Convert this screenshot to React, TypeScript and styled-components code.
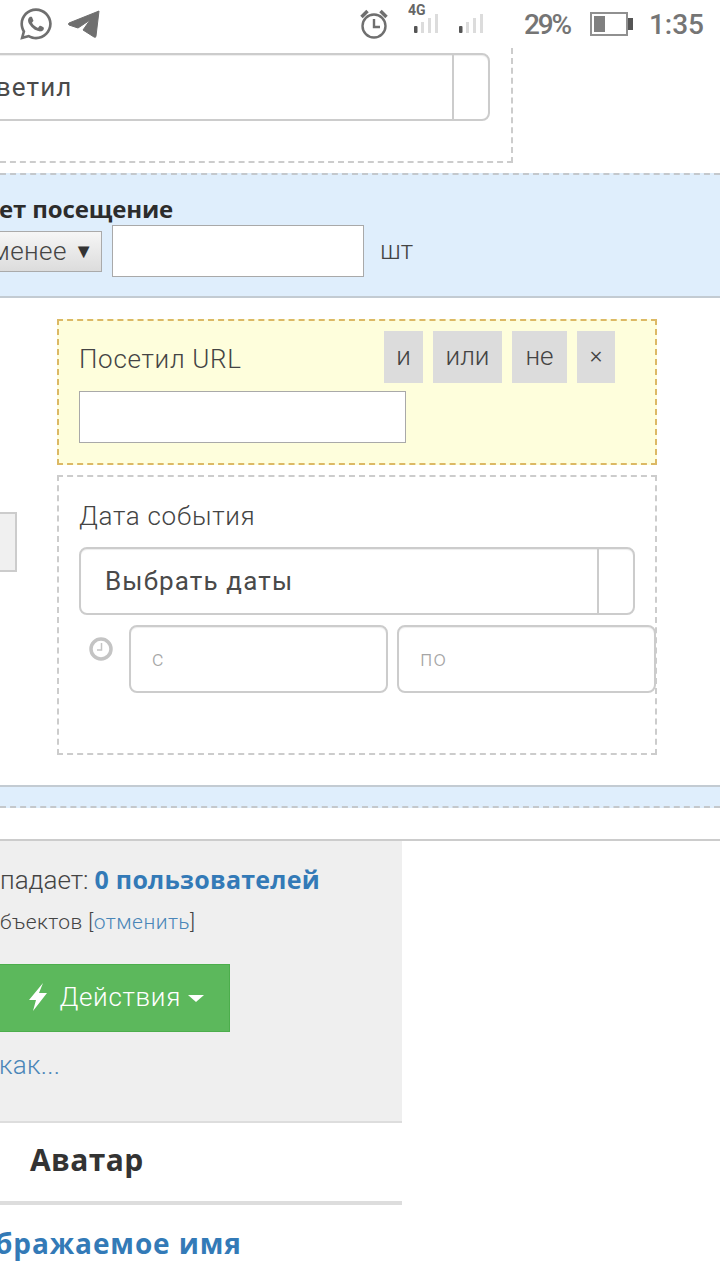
import React from "react";
import styled, { createGlobalStyle } from "styled-components";
import { FaWhatsapp } from "react-icons/fa";

const Global = createGlobalStyle`
  html, body { margin: 0; padding: 0; background: #fff; }
  * { box-sizing: border-box; }
`;

const Page = styled.div`
  width: 720px;
  height: 1280px;
  overflow: hidden;
  background: #fff;
  font-family: Roboto, "Liberation Sans", sans-serif;
  font-weight: 300;
  color: #333;
  display: flex;
  flex-direction: column;
`;

const StatusBar = styled.div`
  height: 48px;
  flex: none;
  display: flex;
  align-items: center;
  padding: 0 16px 0 18px;
  color: #6f6f6f;
`;
const StatusLeft = styled.div`
  display: flex;
  align-items: center;
  gap: 14px;
  flex: 1;
`;
const StatusText = styled.span<{ $size: number; $ml: number; $ls?: number }>`
  font-family: Roboto, sans-serif;
  font-weight: 500;
  font-size: ${(p) => p.$size}px;
  letter-spacing: ${(p) => p.$ls ?? 0}px;
  margin-left: ${(p) => p.$ml}px;
  color: #757575;
`;
const SignalWrap = styled.svg<{ $ml: number }>`
  margin-left: ${(p) => p.$ml}px;
  display: block;
  flex: none;
`;
const BatteryIcon = styled.svg`
  margin-left: 20px;
  flex: none;
`;

const TopCard = styled.div`
  width: 513px;
  height: 115px;
  flex: none;
  padding-top: 5px;
  border-right: 2px dashed #ccc;
  border-bottom: 2px dashed #ccc;
`;
const ChoiceBox = styled.div<{ $w: number; $ml?: number; $pl: number }>`
  width: ${(p) => p.$w}px;
  margin-left: ${(p) => p.$ml ?? 0}px;
  height: 68px;
  padding-left: ${(p) => p.$pl}px;
  border: 2px solid #ccc;
  border-radius: 8px;
  box-shadow: inset 0 1px 1px rgba(0, 0, 0, 0.075);
  display: flex;
  align-items: center;
  justify-content: space-between;
  background: #fff;
  font-size: 26px;
  letter-spacing: 1.15px;
  font-weight: 400;
  color: #4a4a4a;
`;
const ChoiceArrow = styled.div`
  width: 36px;
  height: 100%;
  border-left: 2px solid #ccc;
  flex: none;
`;

const BlueBand = styled.div`
  margin-top: 10px;
  height: 125px;
  flex: none;
  background: #dfeefc;
  border-top: 2px dashed #c4c8cc;
  border-bottom: 2px solid #c3cbd2;
  padding-top: 19px;
`;
const BandTitle = styled.div`
  font-family: "Open Sans", sans-serif;
  font-weight: 700;
  font-size: 24px;
  letter-spacing: -0.15px;
  line-height: 30px;
  color: #2c2c2c;
  margin-left: -1px;
  white-space: nowrap;
`;
const BandRow = styled.div`
  display: flex;
  align-items: center;
  height: 52px;
  margin-top: 1px;
`;
const FakeSelect = styled.div`
  width: 102px;
  height: 41px;
  padding-right: 7px;
  border: 1px solid #aaa;
  border-left: none;
  background: linear-gradient(#f6f6f6, #dcdcdc);
  display: flex;
  align-items: center;
  justify-content: flex-end;
  gap: 7px;
  overflow: hidden;
  font-size: 26px;
  letter-spacing: 0.4px;
  color: #444;
  white-space: nowrap;
`;
const SelectTri = styled.span`
  font-family: "DejaVu Sans", sans-serif;
  font-size: 20px;
  color: #333;
`;
const TextField = styled.div<{ $w: number }>`
  width: ${(p) => p.$w}px;
  height: 52px;
  flex: none;
  background: #fff;
  border: 1px solid #a9a9a9;
`;
const BandField = styled(TextField)`
  margin-left: 10px;
`;
const Unit = styled.span`
  margin-left: 16px;
  padding-bottom: 2px;
  font-size: 26px;
  color: #444;
`;

const Middle = styled.div`
  height: 487px;
  flex: none;
  display: flex;
  align-items: flex-start;
`;
const Stub = styled.div`
  width: 17px;
  height: 60px;
  flex: none;
  margin-top: 214px;
  background: #f0f0f0;
  border: 2px solid #ccc;
  border-left: none;
`;
const ConditionColumn = styled.div`
  margin-left: 40px;
  margin-top: 21px;
  width: 600px;
  display: flex;
  flex-direction: column;
  gap: 10px;
`;
const UrlCard = styled.div`
  height: 146px;
  background: #fefedc;
  border: 2px dashed #dcb965;
  padding: 10px 20px;
  position: relative;
`;
const CardLabel = styled.div`
  font-size: 26px;
  letter-spacing: 0.7px;
  line-height: 32px;
  color: #444;
`;
const UrlLabel = styled(CardLabel)`
  margin-top: 12px;
  margin-bottom: 16px;
`;
const Ops = styled.div`
  position: absolute;
  top: 10px;
  left: 325px;
  display: flex;
  gap: 10px;
`;
const Op = styled.div<{ $w: number; $small?: boolean }>`
  width: ${(p) => p.$w}px;
  height: 52px;
  background: #dcdcdc;
  display: flex;
  align-items: center;
  justify-content: center;
  font-size: ${(p) => (p.$small ? 24 : 26)}px;
  color: #444;
  padding-bottom: ${(p) => (p.$small ? 5 : 2)}px;
`;
const DateCard = styled.div`
  height: 280px;
  border: 2px dashed #ccc;
  padding: 23px 20px 0;
`;
const DateLabel = styled(CardLabel)`
  margin-bottom: 15px;
`;
const RangeRow = styled.div`
  margin-top: 10px;
  margin-right: -22px;
  display: flex;
  gap: 9px;
`;
const ClockSlot = styled.div`
  width: 41px;
  flex: none;
  padding: 12px 0 0 10px;
`;
const RangeField = styled.div`
  width: 259px;
  height: 68px;
  flex: none;
  border: 2px solid #ccc;
  border-radius: 8px;
  box-shadow: inset 0 1px 1px rgba(0, 0, 0, 0.075);
  background: #fff;
  padding: 0 0 2px 21px;
  display: flex;
  align-items: center;
  font-size: 22px;
  letter-spacing: 1px;
  color: #a6a6a6;
`;
const SlimBand = styled.div`
  height: 23px;
  flex: none;
  background: #dfeefc;
  border-top: 2px solid #c3cbd2;
  border-bottom: 2px dashed #c4c8cc;
`;
const Rule = styled.div`
  margin-top: 31px;
  height: 2px;
  flex: none;
  background: #ccc;
`;
const Panel = styled.div`
  width: 402px;
  height: 280px;
  flex: none;
  background: #efefef;
  overflow: hidden;
`;
const Summary = styled.div`
  margin-top: 22px;
  display: flex;
  align-items: baseline;
  gap: 6px;
  font-size: 26px;
  line-height: 32px;
  color: #444;
  white-space: nowrap;
`;
const Bold = styled.span`
  font-family: "Open Sans", sans-serif;
  font-weight: 700;
  font-size: 25px;
  letter-spacing: 0.25px;
  color: #337ab7;
`;
const SmallLine = styled.div`
  margin-top: 11px;
  font-size: 21px;
  letter-spacing: 0.45px;
  line-height: 30px;
  color: #444;
  white-space: nowrap;
`;
const Link = styled.span`
  color: #4a86b8;
`;
const ActionButton = styled.div`
  margin-top: 27px;
  width: 230px;
  height: 68px;
  padding-bottom: 2px;
  background: #5cb85c;
  border: 1px solid #4cae4c;
  border-left: none;
  display: flex;
  align-items: center;
  justify-content: flex-end;
  padding-right: 25px;
  color: #fff;
  font-size: 26px;
  letter-spacing: 0.7px;
  white-space: nowrap;
`;
const Caret = styled.span`
  margin-left: 7px;
  margin-top: 2px;
  width: 0;
  height: 0;
  border-left: 8px solid transparent;
  border-right: 8px solid transparent;
  border-top: 7px solid #fff;
`;
const BoltIcon = styled.svg`
  margin-right: 11px;
  flex: none;
`;
const HowLink = styled.div`
  margin-top: 17px;
  margin-left: -1px;
  font-size: 26px;
  letter-spacing: 0.3px;
  line-height: 32px;
  color: #4a86b8;
  white-space: nowrap;
`;
const HeadCell = styled.div`
  width: 402px;
  height: 84px;
  flex: none;
  border-top: 2px solid #ddd;
  border-bottom: 4px solid #ddd;
  padding: 17px 0 0 30px;
  font-family: "Open Sans", sans-serif;
  font-weight: 700;
  font-size: 30px;
  letter-spacing: 0.35px;
  line-height: 40px;
  color: #333;
`;
const NameCell = styled.div`
  margin-top: 18px;
  margin-left: -5px;
  font-family: "Open Sans", sans-serif;
  font-weight: 700;
  font-size: 28px;
  letter-spacing: 0.9px;
  line-height: 40px;
  color: #337ab7;
  white-space: nowrap;
`;

const Signal = ({ ml, w4g }: { ml: number; w4g?: boolean }) => (
  <SignalWrap $ml={ml} width="34" height="48" viewBox="0 0 34 48">
    {w4g && (
      <text x="0" y="15" fontFamily="Roboto, sans-serif" fontWeight="700" fontSize="14" fill="#666">
        4G
      </text>
    )}
    <rect x="6" y="26" width="3.5" height="7" rx="1" fill="#555" />
    <rect x="13" y="22" width="3" height="11" fill="#dcdcdc" />
    <rect x="20" y="18" width="3" height="15" fill="#dcdcdc" />
    <rect x="27" y="14" width="3" height="19" fill="#dcdcdc" />
  </SignalWrap>
);

export default function App() {
  return (
    <Page>
      <Global />
      <StatusBar>
        <StatusLeft>
          <FaWhatsapp size={36} />
          <svg width="32" height="30" viewBox="0 0 32 30">
            <path
              d="M31 2 L1 14 Q0 15 1 16 L10 19 L22 11 L15 21 L26 28 Q28 29 28 27 Z"
              fill="#6f6f6f"
              stroke="#6f6f6f"
              strokeWidth="1"
              strokeLinejoin="round"
            />
          </svg>
        </StatusLeft>
        <svg width="28" height="32" viewBox="0 0 28 32" fill="none" stroke="#6f6f6f" strokeWidth="2.4">
          <circle cx="14" cy="18" r="11.5" />
          <path d="M14 11v8h6" />
          <path d="M1.5 9l6-6M26.5 9l-6-6" strokeWidth="3.5" />
        </svg>
        <Signal ml={20} w4g />
        <Signal ml={11} />
        <StatusText $size={28} $ml={37} $ls={-2.2}>29%</StatusText>
        <BatteryIcon width="44" height="26" viewBox="0 0 44 26">
          <rect x="1" y="2" width="36" height="22" fill="#fff" stroke="#909090" strokeWidth="2" />
          <rect x="4" y="5" width="11" height="16" fill="#808080" />
          <rect x="38" y="7" width="5" height="12" fill="#555" />
        </BatteryIcon>
        <StatusText $size={28} $ml={15}>1:35</StatusText>
      </StatusBar>

      <TopCard>
        <ChoiceBox $w={530} $ml={-40} $pl={1}>
          Ответил
          <ChoiceArrow />
        </ChoiceBox>
      </TopCard>

      <BlueBand>
        <BandTitle>ет посещение</BandTitle>
        <BandRow>
          <FakeSelect>
            менее <SelectTri>▼</SelectTri>
          </FakeSelect>
          <BandField $w={252} />
          <Unit>шт</Unit>
        </BandRow>
      </BlueBand>

      <Middle>
        <Stub />
        <ConditionColumn>
          <UrlCard>
            <UrlLabel>Посетил URL</UrlLabel>
            <TextField $w={327} />
            <Ops>
              <Op $w={39}>и</Op>
              <Op $w={69}>или</Op>
              <Op $w={55}>не</Op>
              <Op $w={38} $small>×</Op>
            </Ops>
          </UrlCard>
          <DateCard>
            <DateLabel>Дата события</DateLabel>
            <ChoiceBox $w={556} $pl={24}>
              Выбрать даты
              <ChoiceArrow />
            </ChoiceBox>
            <RangeRow>
              <ClockSlot>
                <svg width="24" height="24" viewBox="0 0 24 24" fill="none" stroke="#c4c4c4">
                  <circle cx="12" cy="12" r="10" strokeWidth="3.5" />
                  <path d="M12.5 6v7H8" strokeWidth="1.5" />
                </svg>
              </ClockSlot>
              <RangeField>с</RangeField>
              <RangeField>по</RangeField>
            </RangeRow>
          </DateCard>
        </ConditionColumn>
      </Middle>

      <SlimBand />
      <Rule />

      <Panel>
        <Summary>
          падает: <Bold>0 пользователей</Bold>
        </Summary>
        <SmallLine>
          бъектов [<Link>отменить</Link>]
        </SmallLine>
        <ActionButton>
          <BoltIcon width="20" height="30" viewBox="0 0 20 30">
            <path d="M15 1 L1 18 L8 18 L5 29 L19 11 L11 11 Z" fill="#fff" />
          </BoltIcon>
          Действия
          <Caret />
        </ActionButton>
        <HowLink>как...</HowLink>
      </Panel>
      <HeadCell>Аватар</HeadCell>
      <NameCell>бражаемое имя</NameCell>
    </Page>
  );
}
